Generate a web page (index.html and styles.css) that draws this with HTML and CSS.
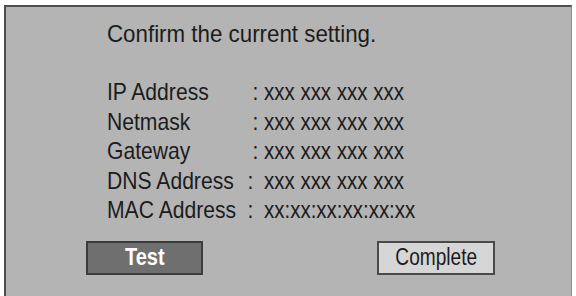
FILE: index.html
```html
<!DOCTYPE html>
<html>
<head>
<meta charset="utf-8">
<link rel="stylesheet" href="styles.css">
</head>
<body>
<div class="panel">
  <div class="title"><span class="cond-title">Confirm the current setting.</span></div>
  <div class="rows">
    <div class="row"><span class="label"><span class="cond-label">IP Address</span></span><span class="colon"><span class="cond-label">:</span></span><span class="val"><span class="cond-val">xxx xxx xxx xxx</span></span></div>
    <div class="row"><span class="label"><span class="cond-label">Netmask</span></span><span class="colon"><span class="cond-label">:</span></span><span class="val"><span class="cond-val">xxx xxx xxx xxx</span></span></div>
    <div class="row"><span class="label"><span class="cond-label">Gateway</span></span><span class="colon"><span class="cond-label">:</span></span><span class="val"><span class="cond-val">xxx xxx xxx xxx</span></span></div>
    <div class="row long"><span class="label"><span class="cond-label">DNS Address</span></span><span class="colon"><span class="cond-label">:</span></span><span class="val"><span class="cond-val">xxx xxx xxx xxx</span></span></div>
    <div class="row long"><span class="label"><span class="cond-label">MAC Address</span></span><span class="colon"><span class="cond-label">:</span></span><span class="val"><span class="cond-val">xx:xx:xx:xx:xx:xx</span></span></div>
  </div>
  <div class="buttons">
    <div class="btn btn-test"><span class="cond-btn">Test</span></div>
    <div class="btn btn-complete"><span class="cond-btn">Complete</span></div>
  </div>
</div>
</body>
</html>
```
FILE: styles.css
```css
html, body {
  margin: 0;
  padding: 0;
  background: #ffffff;
}
body {
  width: 576px;
  height: 296px;
  overflow: hidden;
  padding: 5px 0 0 4px;
  box-sizing: border-box;
  font-family: "Liberation Sans", Arial, sans-serif;
  color: #1c1c1c;
}
.panel {
  width: 568px;
  height: 300px;
  box-sizing: border-box;
  background: #b4b4b4;
  border-top: 2px solid #4e4e4e;
  border-left: 2px solid #4e4e4e;
  border-right: 1px solid #8e8e8e;
  padding: 12px 0 0 101px;
}
.title {
  font-size: 24px;
  line-height: 30px;
  white-space: nowrap;
}
.cond-title,
.cond-label,
.cond-val,
.cond-btn {
  display: inline-block;
  white-space: nowrap;
  transform-origin: left center;
}
.cond-title {
  transform: scaleX(0.93);
}
.rows {
  margin-top: 28px;
}
.row {
  display: grid;
  grid-template-columns: 140px 16px auto;
  font-size: 24px;
  line-height: 29.5px;
  white-space: nowrap;
}
.colon {
  text-align: right;
  padding-right: 4px;
}
.row.long .colon {
  text-align: left;
  padding-right: 0;
}
.val {
  padding-left: 1px;
}
.cond-label {
  transform: scaleX(0.88);
}
.colon .cond-label {
  transform-origin: center center;
}
.cond-val {
  transform: scaleX(0.853);
}
.buttons {
  display: flex;
  gap: 174px;
  margin: 16px 0 0 -21px;
}
.btn {
  width: 117px;
  height: 34px;
  box-sizing: border-box;
  border: 2px solid #3c3c3c;
  display: flex;
  align-items: center;
  justify-content: center;
  font-size: 23px;
}
.cond-btn {
  transform-origin: center center;
}
.btn-test {
  background: #6f6f6f;
  color: #ffffff;
  font-weight: bold;
}
.btn-test .cond-btn {
  transform: scaleX(0.87);
}
.btn-complete {
  width: 118px;
  background: #d6d6d6;
  color: #1c1c1c;
  border-color: #4a4a4a;
}
.btn-complete .cond-btn {
  transform: scaleX(0.83);
}
```
